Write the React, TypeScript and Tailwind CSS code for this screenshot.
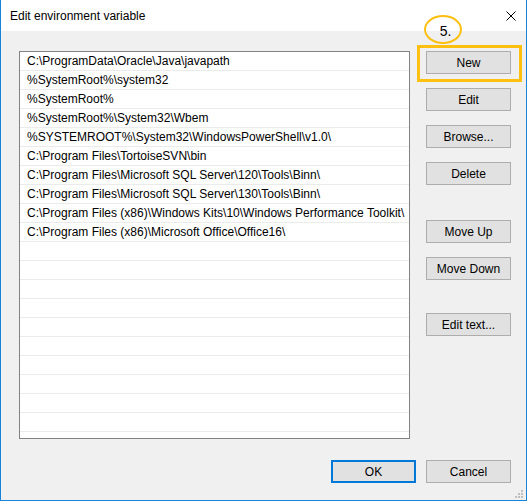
import React from "react";

const paths = [
  "C:\\ProgramData\\Oracle\\Java\\javapath",
  "%SystemRoot%\\system32",
  "%SystemRoot%",
  "%SystemRoot%\\System32\\Wbem",
  "%SYSTEMROOT%\\System32\\WindowsPowerShell\\v1.0\\",
  "C:\\Program Files\\TortoiseSVN\\bin",
  "C:\\Program Files\\Microsoft SQL Server\\120\\Tools\\Binn\\",
  "C:\\Program Files\\Microsoft SQL Server\\130\\Tools\\Binn\\",
  "C:\\Program Files (x86)\\Windows Kits\\10\\Windows Performance Toolkit\\",
  "C:\\Program Files (x86)\\Microsoft Office\\Office16\\",
];

// 21 rows fill the list box, the rest are blank
const rows = [...paths, ...Array(21 - paths.length).fill("")];

function Btn({ label, className = "" }: { label: string; className?: string }) {
  return (
    <button
      className={`h-[23px] w-[85px] bg-[#e1e1e1] border border-[#adadad] text-[12px] text-black leading-none ${className}`}
    >
      {label}
    </button>
  );
}

function CloseIcon() {
  return (
    <svg width="10" height="10" viewBox="0 0 10 10" className="block">
      <path d="M0.5 0.5 L9.5 9.5 M9.5 0.5 L0.5 9.5" stroke="#000" strokeWidth="1" />
    </svg>
  );
}

function Grip() {
  const dots = [
    [6, 0],
    [3, 3],
    [6, 3],
    [0, 6],
    [3, 6],
    [6, 6],
  ];
  return (
    <svg width="8" height="8" viewBox="0 0 8 8" className="block">
      {dots.map(([x, y], i) => (
        <rect key={i} x={x} y={y} width="2" height="2" fill="#bfbfbf" />
      ))}
    </svg>
  );
}

export default function App() {
  return (
    <div className="w-[530px] h-[504px] bg-white" style={{ fontFamily: '"Segoe UI", "Liberation Sans", Arial, sans-serif' }}>
      <div className="relative w-[527px] h-[501px] border-l border-r border-b border-[#1883d7] flex flex-col bg-[#f0f0f0]">
        {/* title bar */}
        <div className="h-[31px] bg-white flex items-center justify-between pl-[9px] pr-[10px]">
          <span className="text-[12px] text-black">Edit environment variable</span>
          <CloseIcon />
        </div>

        <div className="flex flex-col pt-[20px] pl-[18px]">
          <div className="flex gap-[16px]">
            <div className="w-[391px] h-[388px] border border-[#828282] bg-white overflow-hidden">
              {rows.map((p, i) => (
                <div
                  key={i}
                  className="h-[19px] border-b border-[#ebebeb] pl-[7px] pt-[1px] text-[12px] leading-[17px] text-black whitespace-nowrap"
                >
                  {p}
                </div>
              ))}
            </div>

            <div className="flex flex-col">
              <Btn label="New" />
              <Btn label="Edit" className="mt-[14px]" />
              <Btn label="Browse..." className="mt-[14px]" />
              <Btn label="Delete" className="mt-[14px]" />
              <Btn label="Move Up" className="mt-[35px]" />
              <Btn label="Move Down" className="mt-[14px]" />
              <Btn label="Edit text..." className="mt-[33px]" />
            </div>
          </div>

          <div className="flex justify-end gap-[10px] pr-[15px] mt-[21px]">
            <button className="h-[23px] w-[85px] bg-[#e1e1e1] border-2 border-[#0078d7] text-[12px] text-black leading-none">
              OK
            </button>
            <Btn label="Cancel" />
          </div>
        </div>

        <div className="absolute right-[3px] bottom-[2px]">
          <Grip />
        </div>

        {/* step marker */}
        <div className="absolute left-[416px] top-[45px] w-[105px] h-[37px] border-[3px] border-[#fdc010]" />
        <div className="absolute left-[423px] top-[15px] w-[38px] h-[29px] rounded-[50%] border-[2px] border-[#fdc010] flex items-center justify-center pt-[4px] pl-[5px] text-[14px] text-black">
          5.
        </div>
      </div>
    </div>
  );
}
